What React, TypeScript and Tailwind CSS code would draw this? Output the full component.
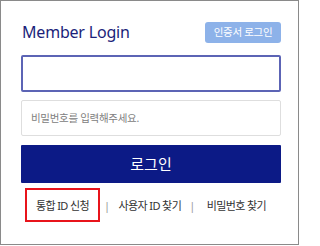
export default function App() {
  return (
    <div className="w-[300px] h-[246px] bg-white" style={{ fontFamily: '"Noto Sans", "Noto Sans CJK KR", sans-serif' }}>
      <div className="w-[299px] h-[245px] border border-[#8a8a8a] pl-[20px] pr-[17px] pt-[20px]">
        <div className="flex items-center justify-between h-[22px]">
          <h1 className="ml-[1px] text-[16px] leading-none text-[#1b1f7a] tracking-[-0.2px]">Member Login</h1>
          <button className="w-[76px] h-[21px] rounded-[3px] bg-[#8db2e9] text-white text-[10.5px] leading-none whitespace-nowrap tracking-[-0.3px]">
            인증서 로그인
          </button>
        </div>

        <div className="mt-[12px] flex flex-col gap-[8px]">
          <input
            className="w-full h-[37px] border-2 border-[#5c64b5] rounded-[2px] outline-none px-2 text-[12px]"
            type="text"
          />
          <input
            className="w-full h-[36px] border border-[#dedede] rounded-[2px] outline-none px-[9px] text-[10.5px] tracking-[-0.3px] placeholder:text-[#808080]"
            type="password"
            placeholder="비밀번호를 입력해주세요."
          />
        </div>

        <button className="mt-[9px] w-full h-[38px] bg-[#0c1a86] text-white text-[15px] leading-none rounded-[1px]">
          로그인
        </button>

        <div className="mt-[5px] flex items-center text-[11px] tracking-[-0.6px] text-[#333] leading-none whitespace-nowrap">
          <a className="ml-[4px] w-[75px] h-[34px] border-2 border-[#e8141b] flex items-center justify-center">
            통합 ID 신청
          </a>
          <span className="ml-[4px] text-[#999]">|</span>
          <a className="ml-[9px]">사용자 ID 찾기</a>
          <span className="ml-[8px] text-[#999]">|</span>
          <a className="ml-[12px]">비밀번호 찾기</a>
        </div>
      </div>
    </div>
  );
}
